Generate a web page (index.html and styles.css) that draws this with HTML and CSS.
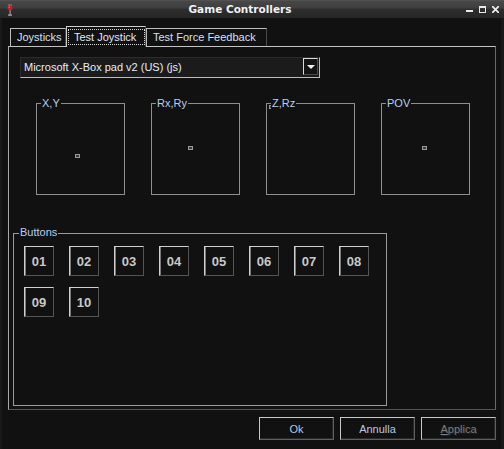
FILE: index.html
```html
<!DOCTYPE html>
<html>
<head>
<meta charset="utf-8">
<title>Game Controllers</title>
<link rel="stylesheet" href="styles.css">
</head>
<body>
<div class="window">
  <div class="titlebar">
    <div class="app-icon">
      <svg width="6" height="12" viewBox="0 0 6 12">
        <rect x="2.5" y="6" width="1.2" height="5" fill="#9a9a9a"/>
        <rect x="1" y="10.5" width="4" height="1.2" fill="#b0b0b0"/>
        <ellipse cx="3" cy="4" rx="2.6" ry="2.4" fill="#c8192a"/>
        <ellipse cx="2.3" cy="3.3" rx="0.9" ry="0.8" fill="#ff5a66"/>
        <rect x="1" y="0.5" width="4" height="1" fill="#8a8a8a"/>
      </svg>
    </div>
    <div class="title">Game Controllers</div>
    <div class="controls">
      <span class="ctl-min"></span>
      <span class="ctl-max"></span>
      <svg class="ctl-close" width="7" height="7" viewBox="0 0 7 7">
        <path d="M0.5 0.5 L6.5 6.5 M6.5 0.5 L0.5 6.5" stroke="#e8e8e8" stroke-width="1.8" stroke-linecap="square"/>
      </svg>
    </div>
  </div>
  <div class="client">
    <div class="tabs">
      <div class="tab tab-joy">Joysticks</div>
      <div class="tab tab-test active"><span class="focus">Test Joystick</span></div>
      <div class="tab tab-force">Test Force Feedback</div>
    </div>
    <div class="pane">
      <div class="combo">
        <span class="combo-text">Microsoft X-Box pad v2 (US) (js)</span>
        <span class="combo-arrow"></span>
      </div>
      <div class="axes">
        <div class="axis"><span class="legend">X,Y</span><span class="dot" style="left:38px;top:50px"></span></div>
        <div class="axis"><span class="legend">Rx,Ry</span><span class="dot" style="left:36px;top:42px"></span></div>
        <div class="axis"><span class="dot" style="left:2px;top:1px"></span><span class="legend">Z,Rz</span></div>
        <div class="axis"><span class="legend">POV</span><span class="dot" style="left:40px;top:42px"></span></div>
      </div>
      <div class="group">
        <span class="legend group-legend">Buttons</span>
        <div class="btn-grid">
          <div class="jbtn">01</div>
          <div class="jbtn">02</div>
          <div class="jbtn">03</div>
          <div class="jbtn">04</div>
          <div class="jbtn">05</div>
          <div class="jbtn">06</div>
          <div class="jbtn">07</div>
          <div class="jbtn">08</div>
          <div class="jbtn">09</div>
          <div class="jbtn">10</div>
        </div>
      </div>
    </div>
    <div class="footer">
      <div class="btn">Ok</div>
      <div class="btn">Annulla</div>
      <div class="btn disabled"><u>A</u>pplica</div>
    </div>
  </div>
</div>
</body>
</html>
```

FILE: styles.css
```css
* {
  box-sizing: border-box;
}

html, body {
  margin: 0;
  padding: 0;
  background: #111111;
}

body {
  font-family: "Liberation Sans", Arial, sans-serif;
  font-size: 11px;
}

.window {
  width: 504px;
  height: 449px;
  background: #111111;
  overflow: hidden;
}

/* title bar */
.titlebar {
  height: 18px;
  display: flex;
  align-items: center;
  background: linear-gradient(#5a5a5a 0px, #484848 1px, #3e3e3e 8px, #2e2e2e 9px, #262626 18px);
}

.app-icon {
  width: 20px;
  display: flex;
  justify-content: center;
  padding-top: 1px;
}

.app-icon svg {
  display: block;
}

.title {
  flex: 1;
  text-align: center;
  font-family: "DejaVu Sans", sans-serif;
  font-weight: bold;
  font-size: 10.5px;
  color: #f2f2f2;
  line-height: 17px;
}

.controls {
  width: 44px;
  display: flex;
  align-items: center;
  gap: 6px;
  padding: 0 5px 0 6px;
}

.ctl-min {
  width: 7px;
  height: 2px;
  margin-top: 4px;
  background: #e8e8e8;
}

.ctl-max {
  width: 7px;
  height: 7px;
  border: 1px solid #e8e8e8;
  border-top-width: 2px;
}

.ctl-close {
  display: block;
}

/* client area */
.client {
  height: 431px;
  box-shadow: inset 2px 0 0 #191919, inset -3px 0 0 #191919;
  overflow: hidden;
}

.tabs {
  display: flex;
  align-items: flex-end;
  height: 20px;
  margin: 8px 0 0 10px;
}

.tab {
  height: 18px;
  border-top: 1px solid #bdbdbd;
  border-left: 1px solid #bdbdbd;
  border-right: 1px solid #4a4a4a;
  padding-left: 6px;
  line-height: 16px;
  color: #d6e0ee;
  white-space: nowrap;
}

.tab-joy { width: 56px; }
.tab-test { width: 80px; }
.tab-force { width: 121px; }

.tab.active {
  height: 21px;
  margin-bottom: -1px;
  position: relative;
  z-index: 1;
  background: #111111;
  padding: 2px 1px 0 1px;
  border-top-color: #d0d0d0;
  border-left-color: #d0d0d0;
}

.focus {
  display: block;
  width: 77px;
  height: 16px;
  border: 1px dotted #d8d8d8;
  padding-left: 5px;
  line-height: 14px;
  color: #e0e8f4;
}

.pane {
  margin: 0 8px;
  height: 364px;
  border-top: 1px solid #c4c4c4;
  border-left: 1px solid #a8a8a8;
  border-right: 1px solid #6a6a6a;
  border-bottom: 1px solid #555555;
  overflow: hidden;
}

/* combo box */
.combo {
  margin: 10px 0 0 11px;
  width: 300px;
  height: 21px;
  border: 1px solid;
  border-color: #2c2c2c #bdbdbd #bdbdbd #2c2c2c;
  background: #1b1b1b;
  display: flex;
  align-items: flex-start;
}

.combo-text {
  padding-left: 3px;
  line-height: 18px;
  color: #e6ecf6;
  white-space: nowrap;
}

.combo-arrow {
  margin-left: auto;
  margin-right: 1px;
  width: 15px;
  height: 17px;
  border: 1px solid;
  border-color: #dadada #4a4a4a #4a4a4a #dadada;
  background: #141414;
  display: flex;
  align-items: center;
  justify-content: center;
}

.combo-arrow::after {
  content: "";
  width: 0;
  height: 0;
  border-left: 4px solid transparent;
  border-right: 4px solid transparent;
  border-top: 4px solid #f0f0f0;
}

/* axis boxes */
.axes {
  display: flex;
  gap: 26px;
  margin: 25px 0 0 27px;
}

.axis {
  position: relative;
  width: 89px;
  height: 92px;
  border: 1px solid #8e8e8e;
}

.legend {
  position: absolute;
  top: -7px;
  left: 4px;
  padding: 0 1px;
  background: #111111;
  color: #b4cef2;
  line-height: 13px;
  white-space: nowrap;
}

.dot {
  position: absolute;
  width: 5px;
  height: 4px;
  border: 1px solid #9a9a9a;
  background: #3a3a3a;
}

/* buttons group */
.group {
  position: relative;
  margin: 38px 0 0 4px;
  width: 374px;
  height: 173px;
  border: 1px solid #9a9a9a;
  padding: 12px 0 0 10px;
}

.group-legend {
  top: -8px;
  left: 5px;
}

.btn-grid {
  display: grid;
  grid-template-columns: repeat(8, 30px);
  column-gap: 15px;
  row-gap: 11px;
}

.jbtn {
  width: 30px;
  height: 30px;
  border: 1px solid;
  border-color: #d0d0d0 #545454 #545454 #d0d0d0;
  box-shadow: inset 1px 0 0 #7a7a7a;
  display: flex;
  align-items: center;
  justify-content: center;
  font-weight: bold;
  font-size: 13px;
  color: #c8c8c8;
}

/* footer */
.footer {
  display: flex;
  justify-content: flex-end;
  gap: 6px;
  margin-top: 7px;
  padding-right: 8px;
}

.btn {
  width: 75px;
  height: 23px;
  border: 1px solid;
  border-color: #c8c8c8 #5e5e5e #5e5e5e #c8c8c8;
  box-shadow: inset -1px -1px 0 #2a2a2a;
  display: flex;
  align-items: center;
  justify-content: center;
  color: #b4c8e4;
  font-size: 11px;
}

.btn.disabled {
  color: #7a7a7a;
  text-shadow: 1px 1px 0 #262626;
}
```
